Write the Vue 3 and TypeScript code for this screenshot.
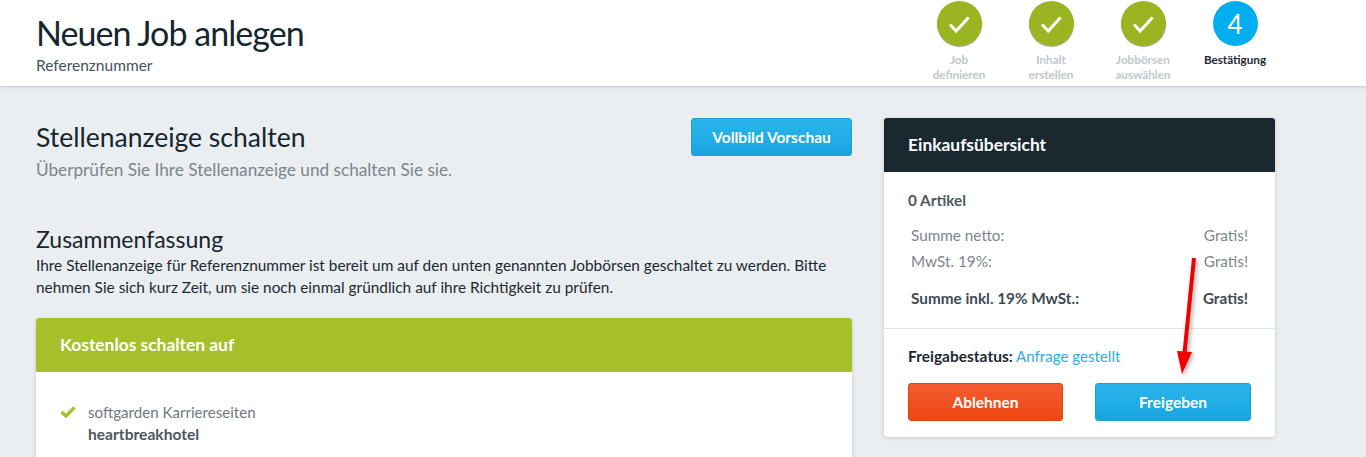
<template>
  <div class="page">
    <header class="topbar">
      <div class="topbar-title">
        <h1>Neuen Job anlegen</h1>
        <p>Referenznummer</p>
      </div>
      <ol class="steps">
        <li v-for="step in steps" :key="step.label" :class="['step', { current: step.current }]">
          <span class="step-dot">
            <template v-if="step.current">4</template>
            <svg v-else width="24" height="24" viewBox="0 0 24 24" fill="none">
              <path d="M3 12.5 L9.2 19 L21.5 5.5" stroke="#fff" stroke-width="3" />
            </svg>
          </span>
          <span class="step-label">{{ step.label }}</span>
        </li>
      </ol>
    </header>

    <main class="content">
      <section class="main-col">
        <div class="intro">
          <div>
            <h2>Stellenanzeige schalten</h2>
            <p class="lead">Überprüfen Sie Ihre Stellenanzeige und schalten Sie sie.</p>
          </div>
          <button class="btn btn-blue preview">Vollbild Vorschau</button>
        </div>

        <h3>Zusammenfassung</h3>
        <p class="summary">
          Ihre Stellenanzeige für Referenznummer ist bereit um auf den unten genannten Jobbörsen geschaltet zu werden. Bitte
          nehmen Sie sich kurz Zeit, um sie noch einmal gründlich auf ihre Richtigkeit zu prüfen.
        </p>

        <div class="card">
          <div class="card-head green">Kostenlos schalten auf</div>
          <div class="card-body">
            <svg class="tick" width="16" height="12" viewBox="0 0 16 12" fill="none">
              <path d="M1.5 6 L6 10 L14.5 1.5" stroke="#a6c02c" stroke-width="3.4" />
            </svg>
            <div class="board">
              <span>softgarden Karriereseiten</span>
              <strong>heartbreakhotel</strong>
            </div>
          </div>
        </div>
      </section>

      <aside class="side-col">
        <div class="card">
          <div class="card-head dark">Einkaufsübersicht</div>
          <div class="cart">
            <div class="count">0 Artikel</div>
            <div class="row"><span>Summe netto:</span><span>Gratis!</span></div>
            <div class="row"><span>MwSt. 19%:</span><span>Gratis!</span></div>
            <div class="row total"><span>Summe inkl. 19% MwSt.:</span><span>Gratis!</span></div>
          </div>
          <div class="approval">
            <div class="status"><strong>Freigabestatus:</strong> <a>Anfrage gestellt</a></div>
            <div class="actions">
              <button class="btn btn-red">Ablehnen</button>
              <button class="btn btn-blue">Freigeben</button>
            </div>
          </div>
        </div>
      </aside>
    </main>

    <svg class="arrow" width="40" height="130" viewBox="0 0 40 130">
      <defs>
        <filter id="arrow-shadow" x="-50%" y="-10%" width="200%" height="120%">
          <feDropShadow dx="2" dy="2" stdDeviation="2" flood-color="#000" flood-opacity="0.3" />
        </filter>
      </defs>
      <g filter="url(#arrow-shadow)">
        <path d="M27 2 L17.5 97" stroke="#f00000" stroke-width="4" fill="none" />
        <path d="M10 95 L25 96 L15 118 Z" fill="#f00000" />
      </g>
    </svg>
  </div>
</template>

<script setup lang="ts">
interface Step {
  label: string;
  current?: boolean;
}

const steps: Step[] = [
  { label: 'Job definieren' },
  { label: 'Inhalt erstellen' },
  { label: 'Jobbörsen auswählen' },
  { label: 'Bestätigung', current: true }
]
</script>

<style>
html, body {
  background: #ebeef1;
}
</style>

<style scoped>
.page {
  position: relative;
  height: 457px;
  overflow: hidden;
  background: #ebeef1;
  font-family: Lato, "Open Sans", sans-serif;
  color: #1b2a32;
}

.topbar {
  height: 86px;
  box-sizing: border-box;
  padding: 0 85px 0 36px;
  display: flex;
  justify-content: space-between;
  background: #fff;
  box-shadow: 0 1px 3px rgba(0, 0, 0, 0.18);
}

.topbar-title h1 {
  margin: 12px 0 0;
  font-size: 34px;
  line-height: 42px;
  font-weight: 400;
  letter-spacing: -0.95px;
  color: #16262e;
}

.topbar-title p {
  margin: 2px 0 0;
  font-size: 15.5px;
  line-height: 18px;
  color: #46535c;
}

.steps {
  display: flex;
  list-style: none;
  margin: 0;
  padding: 1px 0 0;
}

.step {
  width: 92px;
  display: flex;
  flex-direction: column;
  align-items: center;
  text-align: center;
}

.step-dot {
  width: 45px;
  height: 45px;
  border-radius: 50%;
  display: flex;
  align-items: center;
  justify-content: center;
  background: #9bb522;
  box-shadow: 0 1px 1px rgba(0, 0, 0, 0.35);
  color: #fff;
  font-size: 26px;
}

.step.current .step-dot {
  background: #00aeef;
  box-shadow: none;
}

.step-label {
  width: 66px;
  margin-top: 6px;
  font-size: 11.7px;
  line-height: 15px;
  font-weight: 700;
  color: #c3c6c9;
}

.step.current .step-label {
  width: auto;
  color: #1b2a32;
}

.content {
  display: flex;
  gap: 32px;
  padding: 32px 0 0 36px;
}

.main-col {
  width: 816px;
}

.side-col {
  width: 391px;
}

.intro {
  display: flex;
  justify-content: space-between;
  align-items: flex-start;
  height: 107px;
}

h2 {
  margin: 0;
  font-size: 26.5px;
  line-height: 38px;
  font-weight: 400;
  color: #16262e;
}

.lead {
  margin: 3px 0 0;
  font-size: 17.2px;
  line-height: 22px;
  color: #7c858c;
}

h3 {
  margin: 0;
  font-size: 23px;
  line-height: 28px;
  font-weight: 400;
  color: #16262e;
}

.summary {
  margin: 1px 0 20px;
  font-size: 15.4px;
  line-height: 22px;
  color: #1b2a32;
}

.card {
  background: #fff;
  border-radius: 3px;
  overflow: hidden;
  box-shadow: 0 1px 4px rgba(0, 0, 0, 0.15);
}

.card-head {
  height: 54px;
  box-sizing: border-box;
  padding: 0 0 2px 24px;
  display: flex;
  align-items: center;
  font-size: 17.4px;
  font-weight: 700;
  color: #fff;
}

.card-head.green {
  background: #a6c02c;
}

.card-head.dark {
  background: #1a2930;
}

.card-body {
  display: flex;
  gap: 12px;
  padding: 29px 24px 0;
  height: 90px;
}

.tick {
  margin-top: 5px;
}

.board {
  display: flex;
  flex-direction: column;
  font-size: 15.1px;
  line-height: 22px;
  color: #6f787f;
}

.board strong {
  font-size: 15.6px;
  color: #4b5760;
}

.btn {
  height: 38px;
  border-radius: 3px;
  font-family: inherit;
  font-size: 15.5px;
  font-weight: 700;
  color: #fff;
  cursor: pointer;
}

.btn-blue {
  border: 1px solid #1b9fd4;
  background: linear-gradient(#2ab5ea, #18a5e0);
}

.btn-red {
  border: 1px solid #df4416;
  background: linear-gradient(#f25c30, #ef4714);
}

.preview {
  width: 161px;
}

.cart {
  padding: 19px 27px 17px 24px;
  font-size: 15.3px;
  border-bottom: 1px solid #e3e5e8;
}

.count {
  font-weight: 700;
  color: #4b5760;
  line-height: 18px;
  margin-bottom: 13px;
}

.row {
  display: flex;
  justify-content: space-between;
  padding-left: 3px;
  line-height: 26px;
  color: #7c858c;
}

.row.total {
  margin-top: 11px;
  font-weight: 700;
  color: #3d4a52;
}

.approval {
  padding: 18px 24px 16px;
}

.status {
  font-size: 15.1px;
  line-height: 18px;
}

.status strong {
  font-size: 15.5px;
}

.status a {
  color: #2bade3;
}

.actions {
  display: flex;
  justify-content: space-between;
  margin-top: 18px;
}

.actions .btn {
  width: 156px;
}

.actions .btn-red {
  width: 155px;
}

.arrow {
  position: absolute;
  left: 1167px;
  top: 256px;
}
</style>
